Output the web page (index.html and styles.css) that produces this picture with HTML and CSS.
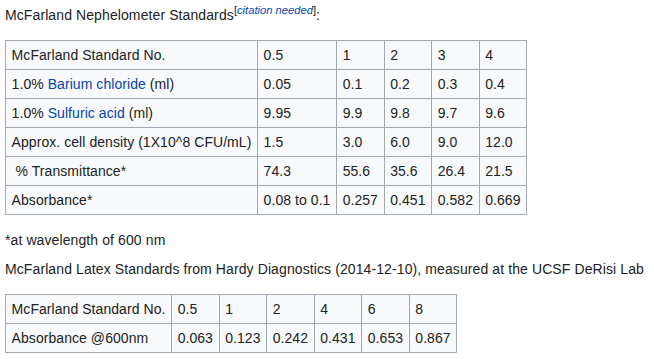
FILE: index.html
```html
<!DOCTYPE html>
<html>
<head>
<meta charset="utf-8">
<link rel="stylesheet" href="styles.css">
</head>
<body>
<div class="content">
<p class="first">McFarland Nephelometer Standards<sup class="noprint">[<i><a href="#">citation needed</a></i>]</sup>:</p>
<table class="wikitable">
<tbody>
<tr><td>McFarland Standard No.</td><td>0.5</td><td>1</td><td>2</td><td>3</td><td>4</td></tr>
<tr><td>1.0% <a href="#">Barium chloride</a> (ml)</td><td>0.05</td><td>0.1</td><td>0.2</td><td>0.3</td><td>0.4</td></tr>
<tr><td>1.0% <a href="#">Sulfuric acid</a> (ml)</td><td>9.95</td><td>9.9</td><td>9.8</td><td>9.7</td><td>9.6</td></tr>
<tr><td>Approx. cell density (1X10^8 CFU/mL)</td><td>1.5</td><td>3.0</td><td>6.0</td><td>9.0</td><td>12.0</td></tr>
<tr><td>&nbsp;% Transmittance*</td><td>74.3</td><td>55.6</td><td>35.6</td><td>26.4</td><td>21.5</td></tr>
<tr><td>Absorbance*</td><td>0.08 to 0.1</td><td>0.257</td><td>0.451</td><td>0.582</td><td>0.669</td></tr>
</tbody>
</table>
<p>*at wavelength of 600 nm</p>
<p>McFarland Latex Standards from Hardy Diagnostics (2014-12-10), measured at the UCSF DeRisi Lab</p>
<table class="wikitable">
<tbody>
<tr><td>McFarland Standard No.</td><td>0.5</td><td>1</td><td>2</td><td>4</td><td>6</td><td>8</td></tr>
<tr><td>Absorbance @600nm</td><td>0.063</td><td>0.123</td><td>0.242</td><td>0.431</td><td>0.653</td><td>0.867</td></tr>
</tbody>
</table>
</div>
</body>
</html>
```
FILE: styles.css
```css
html, body {
  margin: 0;
  padding: 0;
  background: #ffffff;
}
body {
  font-family: "Liberation Sans", Arial, sans-serif;
  font-size: 14px;
  line-height: 1.6;
  letter-spacing: 0.06px;
  color: #222222;
}
.content {
  padding: 4px 5px 0 5px;
}
p {
  margin: 0.4em 0 0.45em 0;
  letter-spacing: 0.1px;
}
p.first {
  margin-top: 0;
}
a {
  color: #0645ad;
  text-decoration: none;
}
sup {
  font-size: 80%;
  line-height: 1;
  vertical-align: super;
  white-space: nowrap;
  letter-spacing: 0;
}
.wikitable {
  background-color: #f8f9fa;
  color: #222222;
  margin: 1em 0;
  border: 1px solid #a2a9b1;
  border-collapse: collapse;
}
.wikitable td {
  border: 1px solid #a2a9b1;
  padding: 0.2em 0.4em;
  text-align: left;
  vertical-align: middle;
}
```
